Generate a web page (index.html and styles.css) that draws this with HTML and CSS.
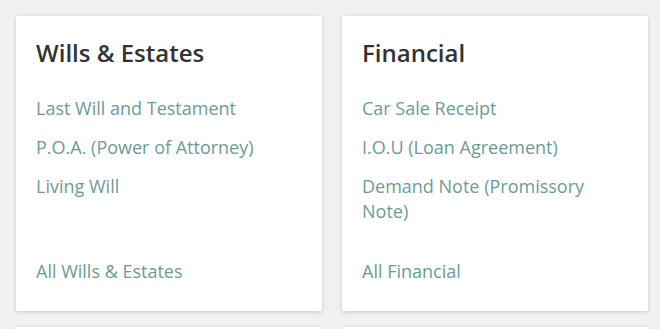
FILE: index.html
```html
<!DOCTYPE html>
<html lang="en">

<head>
    <meta charset="UTF-8">
    <meta name="viewport" content="width=device-width, initial-scale=1.0">
    <title>Legal Forms</title>
    <link rel="stylesheet" href="styles.css">
</head>

<body>
    <div class="grid">
        <!-- Wills & Estates -->
        <div class="card">
            <h2>Wills &amp; Estates</h2>
            <ul>
                <li><a href="#">Last Will and Testament</a></li>
                <li><a href="#">P.O.A. (Power of Attorney)</a></li>
                <li><a href="#">Living Will</a></li>
            </ul>
            <a class="all" href="#">All Wills &amp; Estates</a>
        </div>

        <!-- Financial -->
        <div class="card">
            <h2>Financial</h2>
            <ul>
                <li><a href="#">Car Sale Receipt</a></li>
                <li><a href="#">I.O.U (Loan Agreement)</a></li>
                <li><a href="#">Demand Note (Promissory Note)</a></li>
            </ul>
            <a class="all" href="#">All Financial</a>
        </div>

        <div class="card"></div>
        <div class="card"></div>
    </div>
</body>

</html>
```

FILE: styles.css
```css
body {
    font-family: 'Open Sans', sans-serif;
    background: #f1f1f1;
    margin: 0;
    padding: 16px;
}

.grid {
    display: grid;
    grid-template-columns: 306px 306px;
    column-gap: 20px;
    row-gap: 16px;
}

.card {
    background: #fff;
    box-shadow: 0 1px 4px rgba(0, 0, 0, 0.18);
    padding: 22px 20px 27px;
    display: flex;
    flex-direction: column;
    min-height: 246px;
}

h2 {
    font-size: 24px;
    font-weight: 600;
    line-height: 30px;
    color: #333;
    margin: 0 0 28px;
}

ul {
    list-style-type: none;
    padding: 0;
    margin: 0 0 34px;
}

ul li {
    margin-bottom: 14px;
    font-size: 18px;
    line-height: 25px;
}

ul li:last-child {
    margin-bottom: 0;
}

a {
    color: #6b9c96;
    text-decoration: none;
}

.all {
    margin-top: auto;
    font-size: 18px;
    line-height: 25px;
}
```
